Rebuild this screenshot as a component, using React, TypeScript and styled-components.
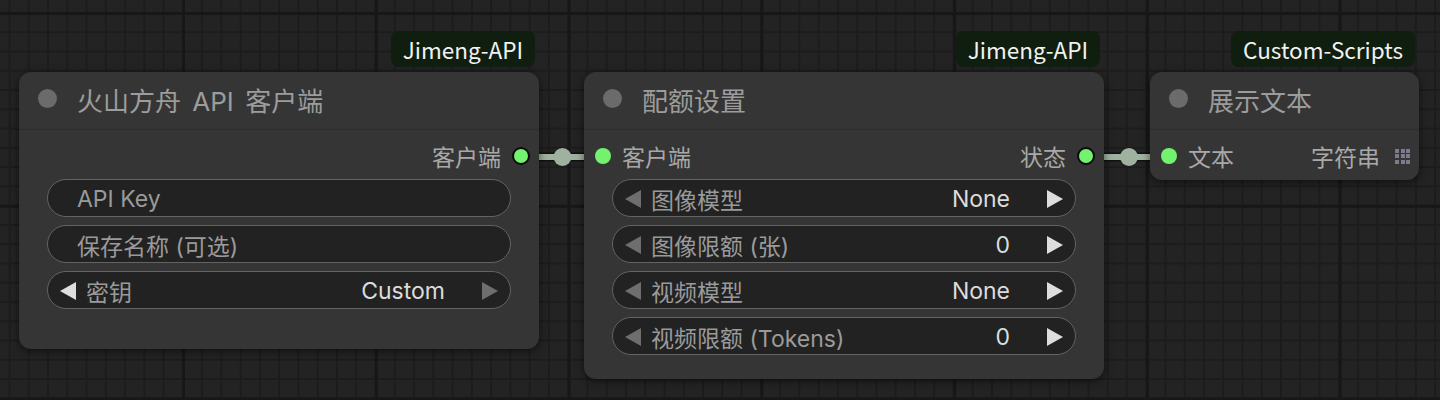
import styled, { createGlobalStyle } from 'styled-components';

const GlobalStyle = createGlobalStyle`
  html, body { margin: 0; padding: 0; background: #222; }
  body { font-family: Inter, "Noto Sans CJK SC", sans-serif; }
`;

const MINOR = 19.28;
const MAJOR = MINOR * 10;

const Canvas = styled.div`
  position: relative;
  width: 1440px;
  height: 400px;
  overflow: hidden;
  background-color: #232323;
  background-image:
    linear-gradient(to right, #171717 3px, transparent 3px),
    linear-gradient(to bottom, #171717 3px, transparent 3px),
    linear-gradient(to right, #1c1c1c 2px, transparent 2px),
    linear-gradient(to bottom, #1c1c1c 2px, transparent 2px);
  background-size:
    ${MAJOR}px ${MAJOR}px,
    ${MAJOR}px ${MAJOR}px,
    ${MINOR}px ${MINOR}px,
    ${MINOR}px ${MINOR}px;
  background-position: 182px 12px, 182px 12px, 8.5px 12px, 8.5px 12px;
`;

const Node = styled.div<{ $x: number; $y: number; $w: number; $h: number }>`
  position: absolute;
  left: ${p => p.$x}px;
  top: ${p => p.$y}px;
  width: ${p => p.$w}px;
  height: ${p => p.$h}px;
  background: #353535;
  border-radius: 12px;
  box-shadow: 0 2px 8px rgba(0, 0, 0, 0.55);
  display: flex;
  flex-direction: column;
`;

const Badge = styled.div`
  position: absolute;
  right: 4px;
  top: -41px;
  height: 36px;
  padding: 0 12px;
  border-radius: 8px;
  background: #0f1e0f;
  color: #f2f2f2;
  font-family: "Noto Sans CJK SC", sans-serif;
  font-size: 22.5px;
  font-weight: 400;
  display: flex;
  align-items: center;
`;

const Title = styled.div`
  height: 58px;
  box-sizing: border-box;
  padding: 0 0 2px 19px;
  border-bottom: 1px solid #2c2c2c;
  display: flex;
  align-items: center;
  gap: 20px;
  color: #9c9c9c;
  font-size: 26px;
  word-spacing: 4px;
`;

const TitleDot = styled.span`
  width: 19px;
  height: 19px;
  margin-bottom: 2px;
  border-radius: 50%;
  background: #6b6b6b;
`;

const Body = styled.div`
  padding-top: 6px;
  display: flex;
  flex-direction: column;
`;

const SlotRow = styled.div`
  height: 40px;
  display: flex;
  align-items: center;
  justify-content: space-between;
  color: #a8a8a8;
  font-size: 23px;
`;

const Slot = styled.div<{ $out?: boolean }>`
  display: flex;
  align-items: center;
  gap: 11px;
  margin-left: ${p => (p.$out ? 'auto' : '11px')};
  margin-right: ${p => (p.$out ? '9px' : '0')};
`;

const SlotDot = styled.span<{ $ring?: boolean }>`
  width: ${p => (p.$ring ? 18 : 16)}px;
  height: ${p => (p.$ring ? 18 : 16)}px;
  border-radius: 50%;
  background: #72f26f;
  box-sizing: border-box;
  border: ${p => (p.$ring ? '2px solid #0a0a0a' : 'none')};
`;

const TypeIcon = styled.span`
  display: grid;
  grid-template-columns: repeat(3, 4px);
  gap: 1.5px;
  margin-left: 4px;
  span { width: 4px; height: 4px; background: #7b7b8c; }
`;

const Widgets = styled.div`
  margin: 3px 28px 0;
  display: flex;
  flex-direction: column;
  gap: 8px;
`;

const Pill = styled.div`
  height: 38px;
  box-sizing: border-box;
  padding-top: 1px;
  border: 1.5px solid #636363;
  border-radius: 19px;
  background: #222;
  display: flex;
  align-items: center;
  font-size: 23px;
  color: #9a9a9a;
`;

const TextLabel = styled.span`
  padding-left: 29px;
`;

const ComboLabel = styled.span`
  margin-left: 10px;
  flex: 1;
  white-space: nowrap;
`;

const ComboValue = styled.span`
  color: #dcdcdc;
  margin-right: 37px;
`;

const Arrow = styled.svg<{ $on: boolean; $side: 'l' | 'r' }>`
  width: 16px;
  height: 18px;
  margin-left: ${p => (p.$side === 'l' ? '12px' : '0')};
  margin-right: ${p => (p.$side === 'r' ? '12px' : '0')};
  fill: ${p => (p.$on ? '#dedede' : '#6e6e6e')};
`;

const Links = styled.svg`
  position: absolute;
  left: 0;
  top: 0;
  pointer-events: none;
`;

function Tri({ side, on }: { side: 'l' | 'r'; on: boolean }) {
  return (
    <Arrow $side={side} $on={on} viewBox="0 0 16 18">
      {side === 'l' ? <polygon points="16,0 16,18 0,9" /> : <polygon points="0,0 0,18 16,9" />}
    </Arrow>
  );
}

function Combo({ label, value, left, right }: { label: string; value: string; left: boolean; right: boolean }) {
  return (
    <Pill>
      <Tri side="l" on={left} />
      <ComboLabel>{label}</ComboLabel>
      <ComboValue>{value}</ComboValue>
      <Tri side="r" on={right} />
    </Pill>
  );
}

function Link({ x1, x2, y }: { x1: number; x2: number; y: number }) {
  const mid = (x1 + x2) / 2;
  return (
    <g>
      <line x1={x1} y1={y} x2={x2} y2={y} stroke="#111" strokeWidth={9} />
      <line x1={x1} y1={y} x2={x2} y2={y} stroke="#9fb29f" strokeWidth={6} />
      <circle cx={mid} cy={y} r={9} fill="#9fb29f" />
    </g>
  );
}

export default function App() {
  return (
    <>
      <GlobalStyle />
      <Canvas>
        <Links width={1440} height={400}>
          <Link x1={528} x2={597} y={157} />
          <Link x1={1095} x2={1163} y={157} />
        </Links>

        <Node $x={19} $y={72} $w={520} $h={277}>
          <Badge>Jimeng-API</Badge>
          <Title>
            <TitleDot />
            火山方舟 API 客户端
          </Title>
          <Body>
            <SlotRow>
              <Slot $out>
                客户端
                <SlotDot $ring />
              </Slot>
            </SlotRow>
            <Widgets>
              <Pill><TextLabel>API Key</TextLabel></Pill>
              <Pill><TextLabel>保存名称 (可选)</TextLabel></Pill>
              <Combo label="密钥" value="Custom" left right={false} />
            </Widgets>
          </Body>
        </Node>

        <Node $x={584} $y={72} $w={520} $h={307}>
          <Badge>Jimeng-API</Badge>
          <Title>
            <TitleDot />
            配额设置
          </Title>
          <Body>
            <SlotRow>
              <Slot>
                <SlotDot />
                客户端
              </Slot>
              <Slot $out>
                状态
                <SlotDot $ring />
              </Slot>
            </SlotRow>
            <Widgets>
              <Combo label="图像模型" value="None" left={false} right />
              <Combo label="图像限额 (张)" value="0" left={false} right />
              <Combo label="视频模型" value="None" left={false} right />
              <Combo label="视频限额 (Tokens)" value="0" left={false} right />
            </Widgets>
          </Body>
        </Node>

        <Node $x={1150} $y={72} $w={269} $h={108}>
          <Badge>Custom-Scripts</Badge>
          <Title>
            <TitleDot />
            展示文本
          </Title>
          <Body>
            <SlotRow>
              <Slot>
                <SlotDot />
                文本
              </Slot>
              <Slot $out>
                字符串
                <TypeIcon>
                  {Array.from({ length: 9 }, (_, i) => <span key={i} />)}
                </TypeIcon>
              </Slot>
            </SlotRow>
          </Body>
        </Node>
      </Canvas>
    </>
  );
}
